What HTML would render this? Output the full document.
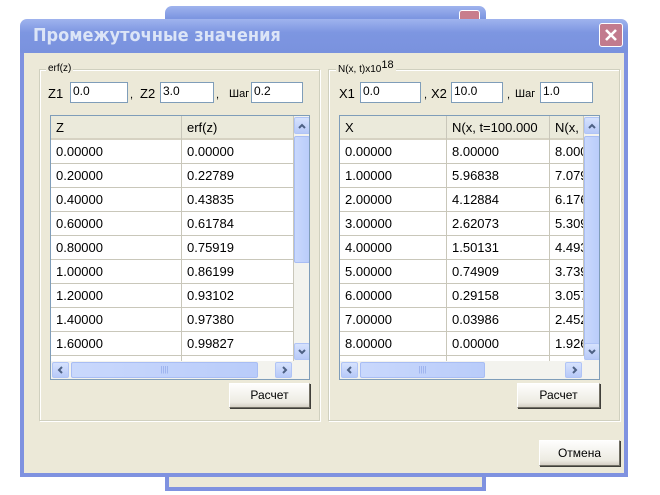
<!DOCTYPE html><html><head><meta charset="utf-8"><style>
*{box-sizing:border-box;margin:0;padding:0}
body{width:660px;height:495px;background:#fff;position:relative;overflow:hidden;font-family:Tahoma,"Liberation Sans","DejaVu Sans",sans-serif;font-size:11px;color:#000}
.a{position:absolute}
.win{background:#ECE9D8;border:4px solid #7F92E0;border-top:none}
.tb{background:linear-gradient(#9FB3EE,#7D96E1 40%,#7A92DE);border-radius:7px 7px 0 0}
.grp{border:1px solid #D0D0BF;box-shadow:inset 1px 1px #fff,1px 1px #fff}
.inp{background:#fff;border:1px solid #7F9DB9;padding:1px 2px;font-size:12px}
.btn{background:linear-gradient(#FEFEFD,#EDEBE2 80%,#D6D0C5);border:1px solid #003C74;border-color:#fff #716F64 #716F64 #fff;box-shadow:1px 1px #403F3A;text-align:center;line-height:22px;font-size:12px}
.tbl{background:#fff;border:1px solid #7F9DB9;overflow:hidden;font-size:13px}
.row{position:absolute;left:0;height:24px;border-bottom:1px solid #C9C7BA;width:100%}
.c{position:absolute;top:0;height:24px;line-height:23px;padding-left:5px;border-right:1px solid #C9C7BA;white-space:nowrap;overflow:hidden}
.hd{background:#EBEADB;border-bottom:2px solid #D6D2C2}
.sb{background:#F3F3EE}
.th{background:linear-gradient(90deg,#C9D8FC,#B9CCFA);border:1px solid #A8BDF4;border-radius:2px}
.ar{background:linear-gradient(#D6E2FD,#B7C9F8);border:1px solid #B0C4F6;border-radius:2px}
.ar svg{position:absolute;left:50%;top:50%;margin:-4px 0 0 -4px}
.lbl{font-size:13px}
.sh{font-size:11px}
</style></head><body>
<div class="a tb" style="left:165px;top:6px;width:321px;height:30px"></div>
<div class="a" style="left:459px;top:10px;width:21px;height:15px;background:#C87D8C;border:1px solid #fff;border-radius:3px"></div>
<div class="a win" style="left:165px;top:36px;width:321px;height:455px"></div>
<div class="a tb" style="left:20px;top:19px;width:608px;height:34px"></div>
<div class="a" style="left:33px;top:25px;font-size:18px;font-weight:bold;color:#DCE5F7;font-family:'DejaVu Sans Condensed','DejaVu Sans',sans-serif">Промежуточные значения</div>
<div class="a" style="left:599px;top:23px;width:24px;height:24px;background:#C27B8E;border:1px solid #fff;border-radius:3px"><svg width="22" height="22" style="position:absolute;left:0;top:0"><path d="M6 6L16 16M16 6L6 16" stroke="#fff" stroke-width="2.6"/></svg></div>
<div class="a win" style="left:20px;top:53px;width:608px;height:424px"></div>

<div class="a grp" style="left:39px;top:69px;width:281px;height:352px"></div>
<div class="a" style="left:46px;top:63px;background:#ECE9D8;padding:0 2px;font-size:10px">erf(z)</div>
<div class="a lbl" style="left:48px;top:86px">Z1</div>
<div class="a inp" style="left:70px;top:82px;width:58px;height:21px">0.0</div>
<div class="a" style="left:130px;top:89px">,</div>
<div class="a lbl" style="left:140px;top:86px">Z2</div>
<div class="a inp" style="left:160px;top:82px;width:54px;height:21px">3.0</div>
<div class="a" style="left:216px;top:89px">,</div>
<div class="a sh" style="left:229px;top:88px">Шаг</div>
<div class="a inp" style="left:251px;top:82px;width:52px;height:21px">0.2</div>

<div class="a tbl" style="left:50px;top:115px;width:260px;height:265px">
 <div class="row hd" style="top:0"><div class="c" style="left:0;width:131px">Z</div><div class="c" style="left:131px;width:112px">erf(z)</div></div>
 <div class="row" style="top:24px"><div class="c" style="width:131px">0.00000</div><div class="c" style="left:131px;width:112px">0.00000</div></div>
 <div class="row" style="top:48px"><div class="c" style="width:131px">0.20000</div><div class="c" style="left:131px;width:112px">0.22789</div></div>
 <div class="row" style="top:72px"><div class="c" style="width:131px">0.40000</div><div class="c" style="left:131px;width:112px">0.43835</div></div>
 <div class="row" style="top:96px"><div class="c" style="width:131px">0.60000</div><div class="c" style="left:131px;width:112px">0.61784</div></div>
 <div class="row" style="top:120px"><div class="c" style="width:131px">0.80000</div><div class="c" style="left:131px;width:112px">0.75919</div></div>
 <div class="row" style="top:144px"><div class="c" style="width:131px">1.00000</div><div class="c" style="left:131px;width:112px">0.86199</div></div>
 <div class="row" style="top:168px"><div class="c" style="width:131px">1.20000</div><div class="c" style="left:131px;width:112px">0.93102</div></div>
 <div class="row" style="top:192px"><div class="c" style="width:131px">1.40000</div><div class="c" style="left:131px;width:112px">0.97380</div></div>
 <div class="row" style="top:216px"><div class="c" style="width:131px">1.60000</div><div class="c" style="left:131px;width:112px">0.99827</div></div>
 <div class="row" style="top:240px;border:none"><div class="c" style="width:131px"></div><div class="c" style="left:131px;width:112px"></div></div>
 <div class="a sb" style="left:243px;top:0;width:16px;height:245px"></div>
 <div class="a ar" style="left:243px;top:1px;width:16px;height:17px"><svg width="8" height="8"><path d="M1 6L4 3L7 6" stroke="#4D6185" stroke-width="2" fill="none"/></svg></div>
 <div class="a th" style="left:243px;top:20px;width:16px;height:127px"></div>
 <div class="a ar" style="left:243px;top:227px;width:16px;height:17px"><svg width="8" height="8"><path d="M1 2L4 5L7 2" stroke="#4D6185" stroke-width="2" fill="none"/></svg></div>
 <div class="a sb" style="left:0;top:245px;width:259px;height:19px"></div>
 <div class="a ar" style="left:1px;top:246px;width:17px;height:16px"><svg width="8" height="8"><path d="M5 1L2 4L5 7" stroke="#4D6185" stroke-width="2" fill="none"/></svg></div>
 <div class="a th" style="left:20px;top:246px;width:187px;height:16px;text-align:center;color:#8FA6E8;font-size:8px;line-height:14px">||||</div>
 <div class="a ar" style="left:224px;top:246px;width:17px;height:16px"><svg width="8" height="8"><path d="M3 1L6 4L3 7" stroke="#4D6185" stroke-width="2" fill="none"/></svg></div>
</div>
<div class="a btn" style="left:229px;top:383px;width:81px;height:25px">Расчет</div>

<div class="a grp" style="left:328px;top:69px;width:292px;height:352px"></div>
<div class="a" style="left:336px;top:63px;background:#ECE9D8;padding:0 2px;font-size:10px">N(x, t)x10<sup style="font-size:11px;position:relative;top:-4px;vertical-align:baseline">18</sup></div>
<div class="a lbl" style="left:339px;top:86px">X1</div>
<div class="a inp" style="left:360px;top:82px;width:61px;height:21px">0.0</div>
<div class="a" style="left:424px;top:89px">,</div>
<div class="a lbl" style="left:431px;top:86px">X2</div>
<div class="a inp" style="left:451px;top:82px;width:52px;height:21px">10.0</div>
<div class="a" style="left:507px;top:89px">,</div>
<div class="a sh" style="left:515px;top:88px">Шаг</div>
<div class="a inp" style="left:540px;top:82px;width:53px;height:21px">1.0</div>

<div class="a tbl" style="left:339px;top:115px;width:261px;height:265px">
 <div class="row hd" style="top:0"><div class="c" style="width:107px">X</div><div class="c" style="left:107px;width:103px">N(x, t=100.000</div><div class="c" style="left:210px;width:34px">N(x,</div></div>
 <div class="row" style="top:24px"><div class="c" style="width:107px">0.00000</div><div class="c" style="left:107px;width:103px">8.00000</div><div class="c" style="left:210px;width:34px">8.00000</div></div>
 <div class="row" style="top:48px"><div class="c" style="width:107px">1.00000</div><div class="c" style="left:107px;width:103px">5.96838</div><div class="c" style="left:210px;width:34px">7.0795</div></div>
 <div class="row" style="top:72px"><div class="c" style="width:107px">2.00000</div><div class="c" style="left:107px;width:103px">4.12884</div><div class="c" style="left:210px;width:34px">6.1766</div></div>
 <div class="row" style="top:96px"><div class="c" style="width:107px">3.00000</div><div class="c" style="left:107px;width:103px">2.62073</div><div class="c" style="left:210px;width:34px">5.3095</div></div>
 <div class="row" style="top:120px"><div class="c" style="width:107px">4.00000</div><div class="c" style="left:107px;width:103px">1.50131</div><div class="c" style="left:210px;width:34px">4.4933</div></div>
 <div class="row" style="top:144px"><div class="c" style="width:107px">5.00000</div><div class="c" style="left:107px;width:103px">0.74909</div><div class="c" style="left:210px;width:34px">3.7393</div></div>
 <div class="row" style="top:168px"><div class="c" style="width:107px">6.00000</div><div class="c" style="left:107px;width:103px">0.29158</div><div class="c" style="left:210px;width:34px">3.0573</div></div>
 <div class="row" style="top:192px"><div class="c" style="width:107px">7.00000</div><div class="c" style="left:107px;width:103px">0.03986</div><div class="c" style="left:210px;width:34px">2.4523</div></div>
 <div class="row" style="top:216px"><div class="c" style="width:107px">8.00000</div><div class="c" style="left:107px;width:103px">0.00000</div><div class="c" style="left:210px;width:34px">1.9263</div></div>
 <div class="row" style="top:240px;border:none"><div class="c" style="width:107px"></div><div class="c" style="left:107px;width:103px"></div></div>
 <div class="a sb" style="left:244px;top:0;width:16px;height:245px"></div>
 <div class="a ar" style="left:244px;top:1px;width:16px;height:17px"><svg width="8" height="8"><path d="M1 6L4 3L7 6" stroke="#4D6185" stroke-width="2" fill="none"/></svg></div>
 <div class="a th" style="left:244px;top:20px;width:16px;height:215px"></div>
 <div class="a ar" style="left:244px;top:227px;width:16px;height:17px"><svg width="8" height="8"><path d="M1 2L4 5L7 2" stroke="#4D6185" stroke-width="2" fill="none"/></svg></div>
 <div class="a sb" style="left:0;top:245px;width:260px;height:19px"></div>
 <div class="a ar" style="left:1px;top:246px;width:17px;height:16px"><svg width="8" height="8"><path d="M5 1L2 4L5 7" stroke="#4D6185" stroke-width="2" fill="none"/></svg></div>
 <div class="a th" style="left:20px;top:246px;width:125px;height:16px;text-align:center;color:#8FA6E8;font-size:8px;line-height:14px">||||</div>
 <div class="a ar" style="left:225px;top:246px;width:17px;height:16px"><svg width="8" height="8"><path d="M3 1L6 4L3 7" stroke="#4D6185" stroke-width="2" fill="none"/></svg></div>
</div>
<div class="a btn" style="left:517px;top:383px;width:83px;height:25px">Расчет</div>

<div class="a btn" style="left:539px;top:440px;width:81px;height:26px;line-height:24px">Отмена</div>
</body></html>
